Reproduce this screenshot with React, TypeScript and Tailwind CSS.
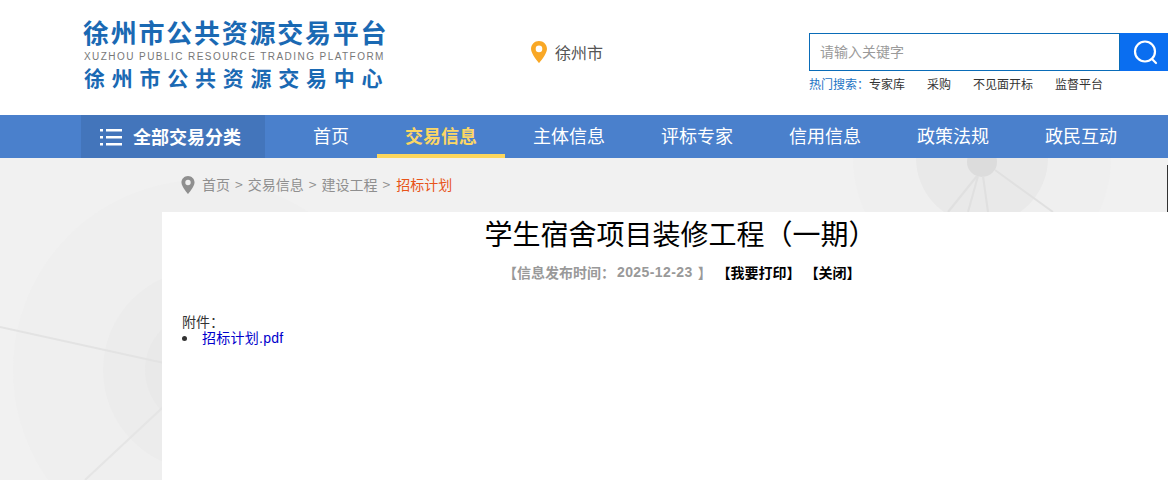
const navItems = ["首页", "交易信息", "主体信息", "评标专家", "信用信息", "政策法规", "政民互动"];
const hotWords = [
  { label: "专家库", className: "w-[58px]" },
  { label: "采购", className: "w-[46px]" },
  { label: "不见面开标", className: "w-[82px]" },
  { label: "监督平台", className: "" },
];

function PinIcon({ className, fill }: { className: string; fill: string }) {
  return (
    <svg viewBox="0 0 16 22" className={className}>
      <path
        fillRule="evenodd"
        fill={fill}
        d="M8 0C3.6 0 0 3.5 0 7.9 0 13 8 22 8 22s8-9 8-14.100C16 3.500 12.400 0 8 0Zm0 11.200a3.300 3.300 0 1 1 0-6.600 3.300 3.300 0 0 1 0 6.600Z"
      />
    </svg>
  );
}

function Backdrop() {
  return (
    <svg className="absolute left-0 top-0 h-[322px] w-[1168px]" viewBox="0 0 1168 322">
      <circle cx="203" cy="212" r="190" fill="#efefef" />
      <circle cx="203" cy="212" r="100" fill="#ececec" />
      <circle cx="203" cy="212" r="58" fill="#e9e9e9" />
      <line x1="0" y1="169" x2="205" y2="214" stroke="#e3e3e3" strokeWidth="2" />
      <line x1="205" y1="210" x2="85" y2="322" stroke="#e5e5e5" strokeWidth="2" />
      <circle cx="982" cy="0" r="129" fill="#efefef" />
      <circle cx="982" cy="0" r="66" fill="#e9e9e9" />
      <circle cx="982" cy="4" r="15" fill="#dcdcdc" />
      <g stroke="#e0e0e0" strokeWidth="2">
        <line x1="977" y1="18" x2="948" y2="54" />
        <line x1="978" y1="18" x2="968" y2="54" />
        <line x1="983" y1="18" x2="988" y2="54" />
        <line x1="995" y1="12" x2="1053" y2="54" />
      </g>
    </svg>
  );
}

export default function App() {
  return (
    <div className="h-[480px] w-[1168px] overflow-hidden bg-white font-['Noto_Sans_CJK_SC','Liberation_Sans',sans-serif]">
      {/* 头部 */}
      <header className="flex h-[115px] pl-[83px]">
        <div className="w-[303px] pt-[14px] text-[#1a69b3]">
          <div className="h-[37px] text-[26px] leading-[36px] font-bold tracking-[1.75px] whitespace-nowrap">
            徐州市公共资源交易平台
          </div>
          <div className="h-[11px] pl-px font-['Liberation_Sans',sans-serif] text-[10px] leading-[12px] tracking-[1.44px] whitespace-nowrap text-[#777777]">
            XUZHOU PUBLIC RESOURCE TRADING PLATFORM
          </div>
          <div className="h-[30px] pl-px text-[21px] leading-[30px] font-bold tracking-[6.75px] whitespace-nowrap">
            徐州市公共资源交易中心
          </div>
        </div>
        <div className="mt-[42px] ml-[145px] flex h-[20px] items-center gap-[8px] self-start whitespace-nowrap">
          <PinIcon className="h-[22px] w-[16px] shrink-0" fill="#f9a826" />
          <span className="text-[16px] leading-[20px] text-[#555555]">徐州市</span>
        </div>
        <div className="ml-[206px] w-[360px] shrink-0 pt-[33px]">
          <div className="flex h-[38px]">
            <div className="flex flex-1 items-center border border-[#0a6cb8] pb-[2px] pl-[10px] text-[14px] text-[#9a9a9a]">
              请输入关键字
            </div>
            <div className="flex w-[49px] items-center justify-center bg-[#0a6ef0]">
              <svg viewBox="0 0 26 26" className="h-[26px] w-[26px]" fill="none" stroke="#ffffff" strokeWidth="2.2">
                <circle cx="13" cy="12.500" r="10" />
                <line x1="20" y1="20" x2="24" y2="24" strokeLinecap="round" />
              </svg>
            </div>
          </div>
          <div className="mt-[4px] flex text-[12px] leading-[18px] text-[#333333]">
            <span className="w-[60px] text-[#1d74c4]">热门搜索：</span>
            {hotWords.map((w) => (
              <span key={w.label} className={w.className}>
                {w.label}
              </span>
            ))}
          </div>
        </div>
      </header>

      {/* 导航 */}
      <nav className="flex h-[43px] bg-[#4a80cc] pl-[81px]">
        <div className="mr-[20px] flex w-[184px] items-center gap-[11px] bg-[#4375bb] pl-[19px]">
          <svg viewBox="0 0 22 18" className="h-[18px] w-[22px]" fill="#ffffff">
            <rect x="0" y="1" width="3" height="2.500" />
            <rect x="0" y="8" width="3" height="2.500" />
            <rect x="0" y="15" width="3" height="2.500" />
            <rect x="6" y="1" width="16" height="2.500" />
            <rect x="6" y="8" width="16" height="2.500" />
            <rect x="6" y="15" width="16" height="2.500" />
          </svg>
          <span className="text-[18px] leading-[41px] font-bold text-white">全部交易分类</span>
        </div>
        {navItems.map((item) => {
          const active = item === "交易信息";
          return (
            <div
              key={item}
              className={
                active
                  ? "border-b-[4px] border-[#fcd65c] px-[28px] text-[18px] leading-[41px] font-bold text-[#fbd665]"
                  : "px-[28px] text-[18px] leading-[41px] text-white"
              }
            >
              {item}
            </div>
          );
        })}
      </nav>

      {/* 主体 */}
      <main className="relative h-[322px] overflow-hidden bg-[#f1f1f1]">
        <Backdrop />
        <div className="absolute top-[7px] right-0 h-[47px] w-px bg-[#333333]" />
        <div className="relative flex h-[54px] items-center pb-[2px] pl-[181px] text-[14px] text-[#8f8f8f]">
          <PinIcon className="mt-[2px] mr-[7px] h-[18px] w-[14px]" fill="#8f8f8f" />
          <span>首页</span>
          <span className="mx-[5px]">&gt;</span>
          <span>交易信息</span>
          <span className="mx-[5px]">&gt;</span>
          <span>建设工程</span>
          <span className="mx-[5px]">&gt;</span>
          <span className="ml-px text-[#e8541a]">招标计划</span>
        </div>
        <article className="relative ml-[162px] h-[268px] w-[1022px] bg-white">
          <h1 className="pt-[1px] pl-[15px] text-center text-[28px] leading-[40px] text-black">
            学生宿舍项目装修工程（一期）
          </h1>
          <div className="mt-[9px] flex pl-[341px] text-[14px] leading-[20px] font-bold whitespace-nowrap">
            <span className="text-[#999999]">【信息发布时间：</span>
            <span className="ml-[2px] font-['Liberation_Sans',sans-serif] tracking-[0.4px] text-[#999999]">2025-12-23</span>
            <span className="ml-[5px] text-[#999999]">】</span>
            <span className="ml-[5px] text-black">【我要打印】</span>
            <span className="ml-[4px] text-black">【关闭】</span>
          </div>
          <div className="mt-[31px] pl-[20px] text-[14px] leading-[17px] text-[#333333]">
            <p>附件：</p>
            <ul>
              <li className="flex items-center">
                <span className="mr-[15px] h-[5px] w-[5px] rounded-full bg-[#333333]" />
                <a className="font-['Liberation_Sans','Noto_Sans_CJK_SC',sans-serif] tracking-[0.25px] text-[#0000cc]">招标计划.pdf</a>
              </li>
            </ul>
          </div>
        </article>
      </main>
    </div>
  );
}
